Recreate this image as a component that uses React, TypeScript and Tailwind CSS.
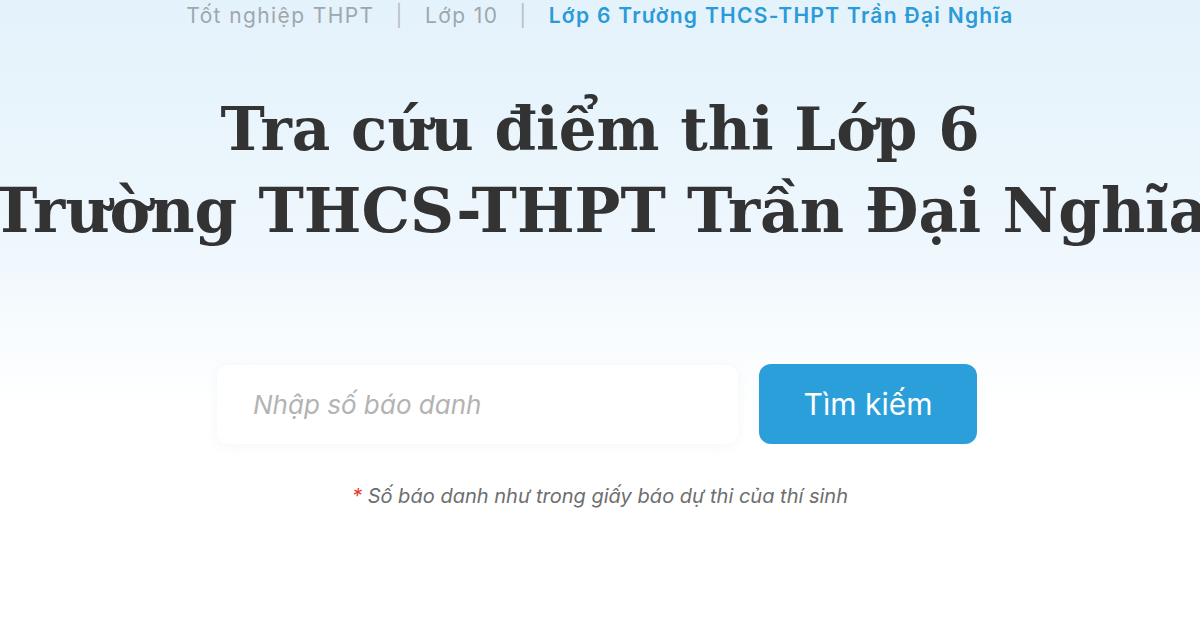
export default function App() {
  return (
    <div className="w-[1200px] h-[630px] overflow-hidden bg-[linear-gradient(to_bottom,#e4f2fb_0%,#eef7fd_38%,#ffffff_64%)] flex flex-col items-center font-['Inter',sans-serif]">
      <nav className="flex items-center gap-[21px] pt-[1px] text-[21px] leading-[30px] tracking-[1.4px] text-[#9ea7ae]">
        <span>Tốt nghiệp THPT</span>
        <span className="text-[#b8c0c6]">|</span>
        <span>Lớp 10</span>
        <span className="text-[#b8c0c6]">|</span>
        <span className="font-semibold tracking-[1.3px] text-[#2b9ad8]">Lớp 6 Trường THCS-THPT Trần Đại Nghĩa</span>
      </nav>
      <h1 className="mt-[57px] w-[1300px] flex flex-col items-center font-['DejaVu_Serif',serif] font-bold leading-[82px] text-[#333333] whitespace-nowrap">
        <span className="text-[59.5px]">Tra cứu điểm thi Lớp 6</span>
        <span className="text-[61px]">Trường THCS-THPT Trần Đại Nghĩa</span>
      </h1>
      <div className="mt-[112px] pr-[6px] flex items-center gap-[21px]">
        <div className="w-[521px] h-[79px] rounded-[12px] bg-white shadow-[0_2px_12px_rgba(150,180,200,0.12)] flex items-center px-[36px]">
          <span className="text-[26px] italic text-[#b3b3b3]">Nhập số báo danh</span>
        </div>
        <button className="w-[218px] h-[80px] rounded-[12px] bg-[#2a9fd9] text-white text-[30px]">
          Tìm kiếm
        </button>
      </div>
      <p className="mt-[38px] text-[20px] leading-[28px] italic text-[#6e6e6e]">
        <span className="text-[#e53935]">* </span>Số báo danh như trong giấy báo dự thi của thí sinh
      </p>
    </div>
  );
}
